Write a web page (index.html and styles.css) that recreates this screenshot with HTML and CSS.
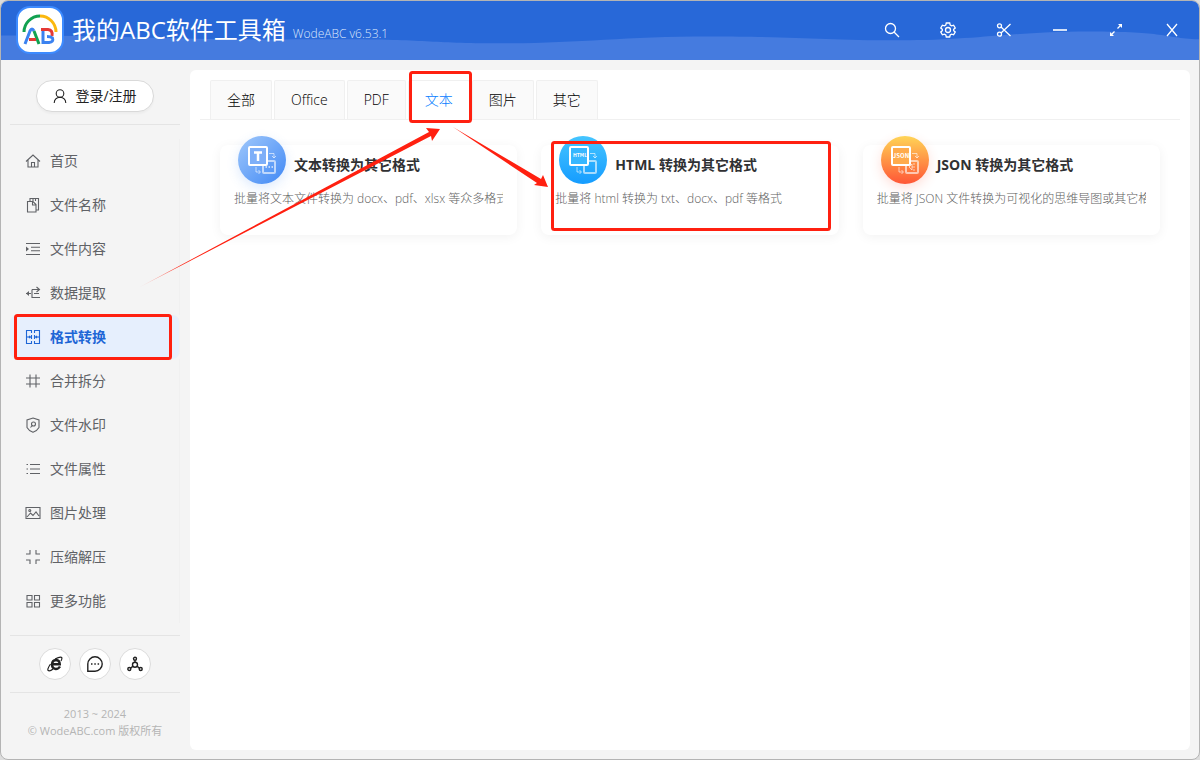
FILE: index.html
```html
<!DOCTYPE html>
<html lang="zh-CN">
<head>
<meta charset="utf-8">
<title>我的ABC软件工具箱</title>
<link rel="stylesheet" href="styles.css">
</head>
<body>
<div class="window">
  <header class="titlebar">
    <svg class="wave" viewBox="0 0 1200 60" preserveAspectRatio="none" aria-hidden="true"><path d="M0 35C130 35 190 40 310 39S420 43 500 43S620 36 710 36S820 40 900 40S1010 31 1090 31S1160 37 1200 39V60H0Z"/></svg>
    <svg class="logo" viewBox="0 0 48 48" aria-hidden="true">
      <rect x="1" y="1" width="46" height="46" rx="13" fill="#fff" stroke="#3d8bff" stroke-width="2"/>
      <g fill="none" stroke-width="3">
        <path d="M8 26A16 16 0 0 1 24 10" stroke="#12a150"/><path d="M24 10A16 16 0 0 1 40 26" stroke="#fbb80f"/>
        <path d="M9 38L14 25Q16 21 18 25" stroke="#3b82f0"/><path d="M18 25L23 38" stroke="#12a150"/><path d="M13 33.500H20" stroke="#e53935"/>
        <path d="M25 23.500H32Q37 24 36 30" stroke="#e53935"/><path d="M27 25V36.500H33Q38 36 36.500 32Q35 30.500 31 30.500" stroke="#3b82f0"/>
      </g>
    </svg>
    <h1 class="app-name">我的ABC软件工具箱</h1>
    <span class="version">WodeABC v6.53.1</span>
    <div class="window-tools">
      <button class="tool" aria-label="搜索"><svg viewBox="0 0 16 16"><circle cx="6.500" cy="6.500" r="5"/><path d="M10 10L15 15"/></svg></button>
      <button class="tool" aria-label="设置"><svg viewBox="0 0 16 16"><path d="M6.300 1H9.700L10.200 3L11.600 3.800L13.600 3.200L15.200 6L13.700 7.300V8.700L15.200 10L13.600 12.800L11.600 12.200L10.200 13L9.700 15H6.300L5.800 13L4.400 12.200L2.400 12.800L.8 10L2.300 8.700V7.300L.8 6L2.400 3.200L4.400 3.800L5.800 3Z"/><circle cx="8" cy="8" r="2.500"/></svg></button>
      <button class="tool" aria-label="截图"><svg viewBox="0 0 16 16"><circle cx="3.500" cy="3.800" r="2"/><circle cx="3.500" cy="12.200" r="2"/><path d="M5 5L14.500 14M5 11L14.500 2"/></svg></button>
      <button class="tool" aria-label="最小化"><svg viewBox="0 0 16 16"><path d="M1 8H15" stroke-width="2" opacity=".8"/></svg></button>
      <button class="tool" aria-label="最大化"><svg viewBox="0 0 16 16"><path d="M9.500 6.500L13 3M3 13L6.500 9.500"/><path d="M10 2H14V6ZM2 10V14H6Z" class="solid"/></svg></button>
      <button class="tool" aria-label="关闭"><svg viewBox="0 0 16 16"><path d="M3 2L13 14M13 2L3 14"/></svg></button>
    </div>
  </header>

  <div class="body">
    <aside class="sidebar">
      <button class="login"><svg class="icon" viewBox="0 0 16 16"><circle cx="8" cy="5.500" r="3.800"/><path d="M2.200 15Q2.500 9.500 8 9.300Q13.500 9.500 13.800 15"/></svg>登录/注册</button>
      <nav class="menu">
        <a class="item" href="#"><svg class="icon" viewBox="0 0 16 16"><path d="M1 8.500L8 2L15 8.500M3 7V14H13V7M6.500 14V9.500H9.500V14"/></svg>首页</a>
        <a class="item" href="#"><svg class="icon" viewBox="0 0 16 16"><path d="M2.500 4.500H8L11 7.500V15H2.500ZM7.500 5V8H11M5 4V1.500H13.500V13H11M8 1V4M10.500 1V4"/></svg>文件名称</a>
        <a class="item" href="#"><svg class="icon" viewBox="0 0 16 16"><path d="M1 2.500H15M6 6.200H15M6 9.800H15M1 13.500H15"/><path class="fill" d="M1 5.500L4 8L1 10.500Z"/></svg>文件内容</a>
        <a class="item" href="#"><svg class="icon" viewBox="0 0 16 16"><path d="M7 4.500H14M11.500 2L14.500 4.500L11.500 7M1 8.500H6M7 4.500V12.500H15M9 8.500H14"/><path class="fill" d="M1 8.500L4 6V11Z"/></svg>数据提取</a>
        <a class="item active" href="#" aria-current="page"><svg class="icon" viewBox="0 0 16 16"><path d="M6.500 4V1.500H1.500V14.500H6.500V12M9.500 4V1.500H14.500V14.500H9.500V12M6.500 6V10M9.500 6V10M2 8H5M11 8H14M4 7L5.500 8L4 9M12 7L10.500 8L12 9"/></svg>格式转换</a>
        <a class="item" href="#"><svg class="icon" viewBox="0 0 16 16"><path d="M5 1.500V14.500M11 1.500V14.500M1 5H15M1 11H15"/></svg>合并拆分</a>
        <a class="item" href="#"><svg class="icon" viewBox="0 0 16 16"><path d="M8 1L14 3V10.500Q12 14 8 15.300Q4 14 2 10.500V3Z"/><circle cx="8.500" cy="7" r="2"/><path d="M7.200 8.500L5.500 10.500"/></svg>文件水印</a>
        <a class="item" href="#"><svg class="icon" viewBox="0 0 16 16"><path d="M5 3.500H15M5 8H15M5 12.500H15M1.500 3.500H3M1.500 8H3M1.500 12.500H3"/></svg>文件属性</a>
        <a class="item" href="#"><svg class="icon" viewBox="0 0 16 16"><path d="M1 2.500H15V13.500H1ZM2 12L5.500 8L8 10.500L11 7L14 11"/><circle cx="4.800" cy="5.500" r="1"/></svg>图片处理</a>
        <a class="item" href="#"><svg class="icon" viewBox="0 0 16 16"><path d="M1 5H5V1M11 1V5H15M1 11H5V15M11 15V11H15"/></svg>压缩解压</a>
        <a class="item" href="#"><svg class="icon" viewBox="0 0 16 16"><path d="M2 2.500H7V7H2ZM9.500 2.500H14.500V7H9.500ZM2 9.500H7V14H2ZM9.500 9.500H14.500V14H9.500Z"/></svg>更多功能</a>
      </nav>
      <div class="links">
        <a class="round" href="#" aria-label="官网"><svg viewBox="0 0 16 16"><path d="M13 10.500Q11.500 13 8.800 13Q5 12.500 5 8.500Q5.200 4.300 9 4Q12.700 4.300 12.800 8.300H6" stroke-width="2.400"/><path d="M3.500 8Q-.5 14 1.500 14.700Q3.500 15.200 6 13M8 3Q13.500 .2 14.700 1.500Q15.300 2.700 14 5" stroke-width="1.200"/></svg></a>
        <a class="round" href="#" aria-label="反馈"><svg viewBox="0 0 16 16"><path d="M.8 15.200V8A7.200 7.200 0 1 1 8 15.200Z"/><path class="fill" d="M4 7.300H5.500V8.800H4ZM7.300 7.300H8.800V8.800H7.300ZM10.600 7.300H12.100V8.800H10.600Z"/></svg></a>
        <a class="round" href="#" aria-label="分享"><svg viewBox="0 0 16 16"><circle cx="8" cy="2.700" r="1.500"/><circle cx="8" cy="8.800" r="2.500"/><circle cx="2.300" cy="13" r="1.500"/><circle cx="13.700" cy="13" r="1.500"/><path d="M8 4.200V6.300M5.900 10.200L3.600 12.100M10.100 10.200L12.400 12.100"/></svg></a>
      </div>
      <footer class="copyright">2013 ~ 2024<br>© WodeABC.com 版权所有</footer>
    </aside>

    <main class="content">
      <nav class="tabs">
        <button class="tab">全部</button>
        <button class="tab">Office</button>
        <button class="tab">PDF</button>
        <button class="tab selected">文本</button>
        <button class="tab">图片</button>
        <button class="tab">其它</button>
      </nav>
      <section class="cards">
        <a class="card" href="#">
          <div class="card-head">
            <span class="badge text"><svg viewBox="0 0 48 48"><path d="M31 17.500H36V22M34 20L36 22L38 20M18 31V36H22M20.500 34L22.500 36L20.500 38" class="thin"/><rect x="25" y="25" width="12" height="12" rx="1" class="back"/><path d="M27.500 31H29M30.500 31H32M33.500 31H35" class="back"/><rect x="11" y="11" width="18" height="18" rx="1" class="front text-fill"/><path d="M16 16.500H24M20 16.500V25" class="letter"/></svg></span>
            <h2>文本转换为其它格式</h2>
          </div>
          <p>批量将文本文件转换为 docx、pdf、xlsx 等众多格式</p>
        </a>
        <a class="card" href="#">
          <div class="card-head">
            <span class="badge html"><svg viewBox="0 0 48 48"><path d="M31 17.500H36V22M34 20L36 22L38 20M18 31V36H22M20.500 34L22.500 36L20.500 38" class="thin"/><rect x="25" y="25" width="12" height="12" rx="1" class="back"/><rect x="11" y="11" width="18" height="18" rx="1" class="front html-fill"/><text x="21" y="21" class="small">HTML</text></svg></span>
            <h2>HTML 转换为其它格式</h2>
          </div>
          <p>批量将 html 转换为 txt、docx、pdf 等格式</p>
        </a>
        <a class="card" href="#">
          <div class="card-head">
            <span class="badge json"><svg viewBox="0 0 48 48"><path d="M31 17.500H36V22M34 20L36 22L38 20M18 31V36H22M20.500 34L22.500 36L20.500 38" class="thin"/><rect x="25" y="25" width="12" height="12" rx="1" class="back"/><path d="M28 31L31 28V34ZM31 31H34M32 28H34M32 34H34" class="thin"/><rect x="11" y="11" width="18" height="18" rx="1" class="front json-fill"/><text x="20" y="22">JSON</text></svg></span>
            <h2>JSON 转换为其它格式</h2>
          </div>
          <p>批量将 JSON 文件转换为可视化的思维导图或其它格式</p>
        </a>
      </section>
    </main>
  </div>

  <svg class="marks" viewBox="0 0 1200 760" aria-hidden="true">
    <defs><linearGradient id="fade" gradientUnits="userSpaceOnUse" x1="130" y1="292" x2="180" y2="266"><stop offset="0" stop-color="#ff2010" stop-opacity="0"/><stop offset="1" stop-color="#ff2010"/></linearGradient></defs>
    <g class="frames"><rect x="15.500" y="315.500" width="155" height="43" rx="2"/><rect x="410.500" y="72.500" width="60" height="49" rx="2"/><rect x="552.500" y="142.500" width="277" height="87" rx="2"/></g>
    <path d="M138 288L429 132L426 128L440 129L432 141L431 136Z" fill="url(#fade)"/>
    <path d="M453 127L541 179L543 175L548 187L534 185L537 183Z" fill="#ff2010"/>
  </svg>
</div>
</body>
</html>
```
FILE: styles.css
```css
* { box-sizing: border-box; }
body {
  margin: 0;
  background: #ddd;
  color: #222;
  font: 14px/20px "Open Sans", "Noto Sans CJK SC", sans-serif;
}
button { font: inherit; color: inherit; cursor: pointer; }
a { color: inherit; text-decoration: none; }
svg { fill: none; stroke: currentColor; }
.window {
  position: relative;
  display: flex;
  flex-direction: column;
  min-height: 100vh;
  border: 1px solid #b4b4b4;
  border-radius: 8px;
  background: #f4f4f4;
  overflow: hidden;
}
.titlebar {
  position: relative;
  display: flex;
  align-items: center;
  height: 59px;
  padding: 0 0 2px 15px;
  background: #2868d8;
  color: #fff;
}
.wave { position: absolute; inset: 0; width: 100%; height: 100%; fill: #457bdf; stroke: none; }
.logo, .app-name, .version, .window-tools { position: relative; }
.logo { width: 48px; height: 48px; }
.app-name { margin: 0 7px 0 8px; font-size: 24px; line-height: 32px; font-weight: 400; }
.version { padding-top: 8px; font-size: 12px; font-weight: 300; line-height: 16px; color: #dce7fb; }
.window-tools { display: flex; margin: 0 -1px 0 auto; }
.tool {
  display: grid;
  place-items: center;
  width: 56px;
  height: 56px;
  padding: 0;
  border: 0;
  background: none;
}
.tool svg { width: 16px; height: 16px; stroke-width: 1.3; }
.tool .solid { fill: currentColor; stroke: none; }
.body { display: flex; flex: 1; }
.sidebar { display: flex; flex-direction: column; width: 189px; padding: 20px 10px 0 9px; }
.login {
  display: flex;
  align-items: center;
  align-self: center;
  gap: 7px;
  height: 32px;
  padding: 0 16px 1px 15px;
  border: 1px solid #d9d9d9;
  border-radius: 16px;
  background: #fff;
  box-shadow: 0 2px 2px #00000008;
}
.icon { flex: none; width: 16px; height: 16px; stroke-width: 1.1; }
.menu {
  margin-top: 12px;
  padding: 14px 0 12px;
  border-top: 1px solid #e4e4e4;
  border-bottom: 1px solid #e4e4e4;
}
.item {
  display: flex;
  align-items: center;
  gap: 9px;
  height: 44px;
  padding-left: 15px;
  border-right: 1px solid #f0f0f0;
  color: #606266;
}
.item.active { border-radius: 8px; background: #e6effd; color: #1e66d6; font-weight: 700; }
.fill { fill: currentColor; stroke: none; }
.links { display: flex; justify-content: center; gap: 8px; padding: 12px 0; border-bottom: 1px solid #e4e4e4; }
.round {
  display: grid;
  place-items: center;
  width: 32px;
  height: 32px;
  border: 1px solid #dcdcdc;
  border-radius: 50%;
  background: #fff;
}
.round svg { width: 16px; height: 16px; stroke-width: 1.4; }
.copyright { padding-top: 12px; color: #b5b5b5; font-size: 11px; line-height: 17px; text-align: center; }
.content {
  flex: 1;
  min-width: 0;
  margin: 10px 9px 9px 0;
  padding: 10px;
  border-radius: 6px;
  background: #fff;
}
.tabs { display: flex; gap: 2px; height: 40px; padding-left: 10px; border-bottom: 1px solid #f0f0f0; }
.tab {
  padding: 0 16px 1px;
  border: 1px solid #f0f0f0;
  border-bottom: 0;
  border-radius: 2px 2px 0 0;
  background: #fafafa;
  color: #000;
  font-weight: 300;
}
.tab.selected { margin-bottom: -1px; padding-bottom: 2px; background: #fff; color: #0880ff; }
.cards { display: grid; grid-template-columns: repeat(3, 1fr); gap: 24px; padding: 25px 20px; }
.card {
  min-width: 0;
  height: 90px;
  padding: 0 14px;
  border-radius: 8px;
  background: #fff;
  box-shadow: 0 2px 12px #0000000e;
}
.card-head { display: flex; align-items: center; gap: 8px; height: 39px; padding-left: 4px; }
.badge { align-self: flex-end; width: 48px; height: 48px; border-radius: 50%; color: #fff; }
.badge svg { display: block; }
.text { background: linear-gradient(135deg, #a0c8fb, #4088f5); box-shadow: 0 4px 12px #4a90f730; }
.html { background: linear-gradient(#45c5ff, #159cff); }
.json { background: linear-gradient(#ffd456, #ff5636); box-shadow: 0 4px 12px #ff563630; }
.front { stroke-width: 2; }
.text-fill { fill: #7eaff8; }
.html-fill { fill: #37b7ff; }
.json-fill { fill: #ffab4c; }
.back { stroke-width: 2; opacity: .6; }
.thin { opacity: .6; }
.letter { stroke-width: 2.5; }
.badge text { fill: currentColor; stroke: none; font: 700 6px "Noto Sans CJK SC", sans-serif; text-anchor: middle; }
.badge .small { font-size: 5px; }
.card h2 { margin: 0; font-size: 14px; line-height: 20px; color: #303133; }
.card p { margin: 5px 0 0; overflow: hidden; color: #606060; font-size: 12px; font-weight: 300; line-height: 20px; white-space: nowrap; }
.marks { position: absolute; top: -1px; left: -1px; width: 1200px; height: 760px; stroke: none; pointer-events: none; }
.frames { stroke: #ff2010; stroke-width: 3; }
```
